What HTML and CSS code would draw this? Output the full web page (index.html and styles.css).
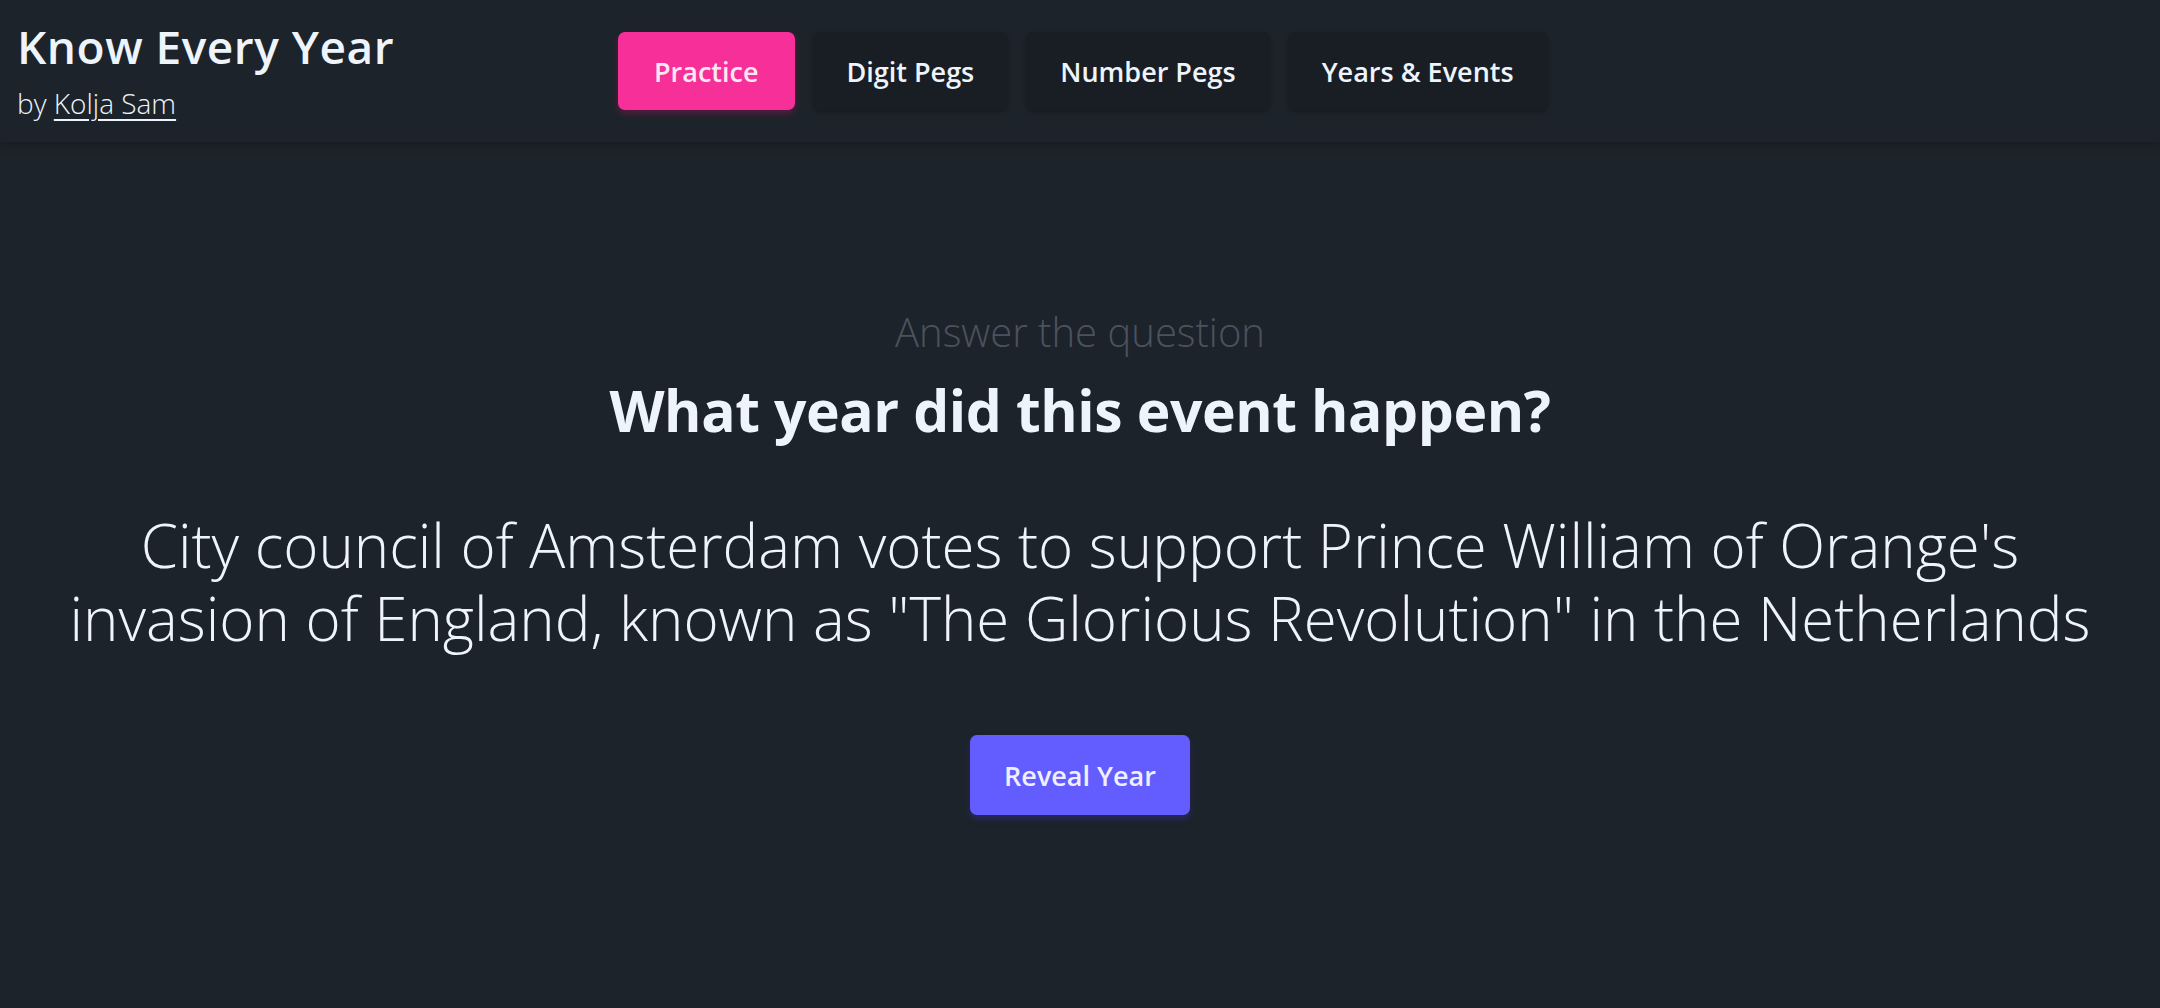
FILE: index.html
```html
<!DOCTYPE html>
<html lang="en">
<head>
<meta charset="utf-8">
<title>Know Every Year</title>
<link rel="stylesheet" href="styles.css">
</head>
<body>
<header class="topbar">
  <div class="brand">
    <div class="brand-title">Know Every Year</div>
    <div class="brand-by">by <a class="brand-link" href="#">Kolja Sam</a></div>
  </div>
  <nav class="tabs">
    <a class="tab tab-active" href="#">Practice</a>
    <a class="tab" href="#">Digit Pegs</a>
    <a class="tab" href="#">Number Pegs</a>
    <a class="tab" href="#">Years &amp; Events</a>
  </nav>
</header>
<main class="quiz">
  <div class="prompt">Answer the question</div>
  <h1 class="question">What year did this event happen?</h1>
  <p class="event">City council of Amsterdam votes to support Prince William of Orange's invasion of England, known as "The Glorious Revolution" in the Netherlands</p>
  <button class="reveal">Reveal Year</button>
</main>
</body>
</html>
```
FILE: styles.css
```css
html, body {
  margin: 0;
  padding: 0;
}
body {
  background: #1d232a;
  color: #eef4fb;
  font-family: "Open Sans", "Noto Sans", sans-serif;
  height: 1008px;
  overflow: hidden;
}
.topbar {
  display: flex;
  align-items: center;
  height: 142px;
  padding: 0 17px;
  box-sizing: border-box;
  box-shadow: 0 4px 10px rgba(0,0,0,0.18);
  position: relative;
}
.brand {
  flex: 0 0 601px;
  display: flex;
  flex-direction: column;
}
.brand-title {
  font-size: 46px;
  font-weight: 600;
  line-height: 50px;
  letter-spacing: 0.5px;
  color: #eef4fb;
}
.brand-by {
  font-size: 28px;
  font-weight: 300;
  line-height: 36px;
  margin-top: 14px;
}
.brand-link {
  color: #eef4fb;
  text-decoration: underline;
  text-underline-offset: 5px;
  text-decoration-thickness: 2px;
}
.tabs {
  display: flex;
  gap: 18px;
}
.tab {
  display: flex;
  align-items: center;
  justify-content: center;
  height: 78px;
  padding: 0 34px;
  border-radius: 7px;
  background: #191e24;
  color: #eef4fb;
  font-size: 27px;
  font-weight: 600;
  text-decoration: none;
  box-shadow: 0 2px 4px rgba(0,0,0,0.25);
}
.tab-active {
  background: #f72f99;
  color: #fbe8f2;
  padding: 0 36px;
  box-shadow: 0 4px 6px rgba(180,20,100,0.35);
}
.quiz {
  display: flex;
  flex-direction: column;
  align-items: center;
  text-align: center;
  padding-top: 165px;
}
.prompt {
  font-size: 40px;
  font-weight: 300;
  color: #4b525e;
  line-height: 50px;
}
.question {
  margin: 18px 0 0;
  font-size: 57px;
  font-weight: 700;
  line-height: 70px;
  letter-spacing: -0.4px;
}
.event {
  margin: 64px 0 0;
  padding: 0 50px;
  font-size: 60px;
  font-weight: 300;
  line-height: 73px;
}
.reveal {
  margin-top: 80px;
  width: 220px;
  height: 80px;
  border: none;
  border-radius: 7px;
  background: #635cff;
  color: #eef0ff;
  font-family: inherit;
  font-size: 27px;
  font-weight: 600;
  box-shadow: 0 4px 6px rgba(60,50,200,0.35);
}
```
